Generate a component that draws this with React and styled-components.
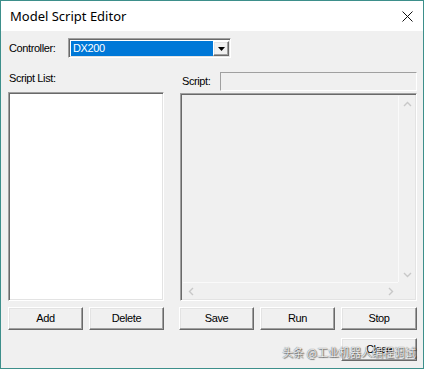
import React from 'react'
import styled, { createGlobalStyle } from 'styled-components'

const GlobalStyle = createGlobalStyle`
    html, body {
        margin: 0;
        padding: 0;
        background: #fff;
    }
    body {
        font-family: "Liberation Sans", Arial, sans-serif;
    }
`

const sunken = `
    border: 1px solid;
    border-color: #a0a0a0 #fff #fff #a0a0a0;
    box-shadow: inset 1px 1px 0 #696969, inset -1px -1px 0 #e3e3e3;
`

const raised = `
    border: 1px solid;
    border-color: #fff #696969 #696969 #fff;
    box-shadow: inset -1px -1px 0 #a0a0a0, inset 1px 1px 0 #e3e3e3;
`

const Window = styled.div`
    position: relative;
    width: 424px;
    height: 369px;
    box-sizing: border-box;
    border: 1px solid #3d8f8b;
    display: flex;
    flex-direction: column;
    background: #f0f0f0;
    overflow: hidden;
`

const TitleBar = styled.div`
    height: 30px;
    flex: none;
    background: #fff;
    display: flex;
    align-items: center;
    justify-content: space-between;
    padding: 0 10px 0 9px;
    font-family: "Noto Sans", sans-serif;
    font-size: 13px;
    color: #000;
`

const Body = styled.div`
    flex: 1;
    padding: 7px 6px 0 7px;
    font-size: 11px;
    letter-spacing: -0.4px;
    color: #000;
`

const Row = styled.div`
    display: flex;
    align-items: center;
    height: 20px;
`

const Label = styled.span`
    width: ${({ w }) => w}px;
    flex: none;
    padding-left: ${({ pad }) => pad || 1}px;
    box-sizing: border-box;
    line-height: 13px;
    white-space: nowrap;
`

const Combo = styled.div`
    ${sunken}
    background: #fff;
    width: 163px;
    height: 20px;
    box-sizing: border-box;
    padding: 2px 1px 1px 2px;
    display: flex;
`

const ComboValue = styled.div`
    flex: 1;
    background: #0078d7;
    color: #fff;
    line-height: 15px;
    padding-left: 2px;
`

const ComboButton = styled.div`
    ${raised}
    width: 16px;
    box-sizing: border-box;
    background: #f0f0f0;
    display: flex;
    align-items: center;
    justify-content: center;
`

const Columns = styled.div`
    display: flex;
    gap: 16px;
    margin-top: 14px;
`

const Column = styled.div`
    width: ${({ w }) => w}px;
    display: flex;
    flex-direction: column;
`

const Header = styled.div`
    height: ${({ h }) => h}px;
    margin-bottom: ${({ mb }) => mb || 0}px;
    display: flex;
    align-items: ${({ center }) => (center ? 'center' : 'flex-start')};
`

const ListBox = styled.div`
    ${sunken}
    background: #fff;
    height: 209px;
    box-sizing: border-box;
`

const Edit = styled.div`
    flex: 1;
    height: 19px;
    box-sizing: border-box;
    border: 1px solid;
    border-color: #a0a0a0 #fff #fff #a0a0a0;
    background: #f0f0f0;
`

const ScriptArea = styled.div`
    ${sunken}
    height: 208px;
    box-sizing: border-box;
    padding: 2px;
    background: #f0f0f0;
    display: grid;
    grid-template-columns: 1fr 16px;
    grid-template-rows: 1fr 16px;
`

const ScrollV = styled.div`
    border-left: 1px solid #fafafa;
    display: flex;
    flex-direction: column;
    justify-content: space-between;
`

const ScrollH = styled.div`
    border-top: 1px solid #fafafa;
    display: flex;
    justify-content: space-between;
`

const ArrowCell = styled.div`
    width: 16px;
    height: 16px;
    display: flex;
    align-items: center;
    justify-content: center;
`

const ButtonRow = styled.div`
    display: flex;
    justify-content: space-between;
    margin-top: ${({ mt }) => mt}px;
    margin-left: ${({ ml }) => ml || 0}px;
`

const Button = styled.div`
    ${raised}
    width: ${({ w }) => w || 75}px;
    height: 23px;
    box-sizing: border-box;
    background: #f0f0f0;
    display: flex;
    align-items: center;
    justify-content: center;
    line-height: 13px;
`

const CloseRow = styled.div`
    display: flex;
    justify-content: flex-end;
    margin-top: 8px;
`

const Watermark = styled.div`
    position: absolute;
    right: 7px;
    bottom: 9px;
    font-family: "Noto Sans CJK SC", sans-serif;
    font-size: 11px;
    line-height: 13px;
    letter-spacing: 0;
    color: rgba(255, 255, 255, 0.92);
    text-shadow: 0 0 1px rgba(0, 0, 0, 0.8), 1px 1px 1px rgba(0, 0, 0, 0.5);
    white-space: nowrap;
`

const Chevron = ({ dir }) => {
    const pts = {
        up: '1,5 4.5,1.5 8,5',
        down: '1,2 4.5,5.5 8,2',
        left: '5,1 1.5,4.5 5,8',
        right: '2,1 5.5,4.5 2,8',
    }[dir]
    const vertical = dir === 'up' || dir === 'down'
    return (
        <svg width={vertical ? 9 : 7} height={vertical ? 7 : 9}>
            <polyline
                points={pts}
                fill="none"
                stroke="#c8c8c8"
                strokeWidth="1.4"
            />
        </svg>
    )
}

const App = () => {
    return (
        <>
            <GlobalStyle />
            <Window>
                <TitleBar>
                    <span>Model Script Editor</span>
                    <svg width="11" height="11">
                        <path d="M0.5 0.5 L10.5 10.5 M10.5 0.5 L0.5 10.5" stroke="#111" strokeWidth="1" />
                    </svg>
                </TitleBar>
                <Body>
                    <Row>
                        <Label w={60}>Controller:</Label>
                        <Combo>
                            <ComboValue>DX200</ComboValue>
                            <ComboButton>
                                <svg width="7" height="4">
                                    <polygon points="0,0 7,0 3.5,4" fill="#000" />
                                </svg>
                            </ComboButton>
                        </Combo>
                    </Row>
                    <Columns>
                        <Column w={156}>
                            <Header h={20}>
                                <Label w={80}>Script List:</Label>
                            </Header>
                            <ListBox />
                            <ButtonRow mt={6}>
                                <Button>Add</Button>
                                <Button>Delete</Button>
                            </ButtonRow>
                        </Column>
                        <Column w={237}>
                            <Header h={19} mb={2} center>
                                <Label w={40} pad={2}>Script:</Label>
                                <Edit />
                            </Header>
                            <ScriptArea>
                                <div />
                                <ScrollV>
                                    <ArrowCell><Chevron dir="up" /></ArrowCell>
                                    <ArrowCell><Chevron dir="down" /></ArrowCell>
                                </ScrollV>
                                <ScrollH>
                                    <ArrowCell><Chevron dir="left" /></ArrowCell>
                                    <ArrowCell><Chevron dir="right" /></ArrowCell>
                                </ScrollH>
                                <div />
                            </ScriptArea>
                            <ButtonRow mt={6} ml={-1}>
                                <Button>Save</Button>
                                <Button>Run</Button>
                                <Button w={76}>Stop</Button>
                            </ButtonRow>
                            <CloseRow>
                                <Button w={76}>Close</Button>
                            </CloseRow>
                        </Column>
                    </Columns>
                </Body>
                <Watermark>头条 @工业机器人编程调试</Watermark>
            </Window>
        </>
    )
}

export default App
